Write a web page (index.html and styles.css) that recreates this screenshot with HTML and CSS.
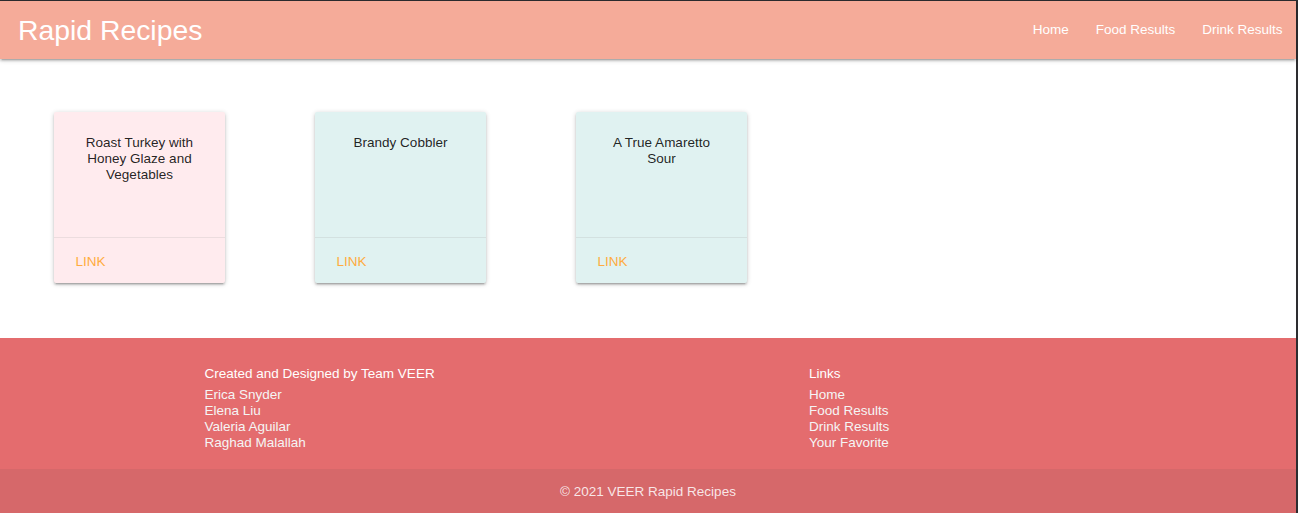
FILE: index.html
```html
<!DOCTYPE html>
<html lang="en">
<head>
<meta charset="utf-8">
<title>Rapid Recipes</title>
<link rel="stylesheet" href="styles.css">
</head>
<body>
<div class="page">
  <nav class="nav">
    <a class="brand" href="#">Rapid Recipes</a>
    <ul class="nav-links">
      <li><a href="#">Home</a></li>
      <li><a href="#">Food Results</a></li>
      <li><a href="#">Drink Results</a></li>
    </ul>
  </nav>
  <main class="main">
    <div class="cards">
      <div class="card card-food">
        <div class="card-content"><p>Roast Turkey with Honey Glaze and Vegetables</p></div>
        <div class="card-action"><a href="#">Link</a></div>
      </div>
      <div class="card card-drink">
        <div class="card-content"><p>Brandy Cobbler</p></div>
        <div class="card-action"><a href="#">Link</a></div>
      </div>
      <div class="card card-drink">
        <div class="card-content"><p>A True Amaretto Sour</p></div>
        <div class="card-action"><a href="#">Link</a></div>
      </div>
    </div>
  </main>
  <footer class="footer">
    <div class="footer-top">
      <div class="footer-col footer-col-left">
        <p class="footer-heading">Created and Designed by Team VEER</p>
        <ul class="footer-list">
          <li>Erica Snyder</li>
          <li>Elena Liu</li>
          <li>Valeria Aguilar</li>
          <li>Raghad Malallah</li>
        </ul>
      </div>
      <div class="footer-col footer-col-right">
        <p class="footer-heading">Links</p>
        <ul class="footer-list">
          <li><a href="#">Home</a></li>
          <li><a href="#">Food Results</a></li>
          <li><a href="#">Drink Results</a></li>
          <li><a href="#">Your Favorite</a></li>
        </ul>
      </div>
    </div>
    <div class="footer-copyright">© 2021 VEER Rapid Recipes</div>
  </footer>
</div>
</body>
</html>
```
FILE: styles.css
```css
* { box-sizing: border-box; }
html, body { margin: 0; padding: 0; }
body {
  font-family: "Liberation Sans", Arial, sans-serif;
  font-size: 13.5px;
  line-height: 16px;
  background: #2d2d30;
}
.page {
  background: #fff;
  margin-top: 1px;
  margin-right: 2px;
  min-height: 512px;
  display: flex;
  flex-direction: column;
}
a { text-decoration: none; color: inherit; }
ul { list-style: none; margin: 0; padding: 0; }
p { margin: 0; }

.nav {
  position: relative;
  z-index: 2;
  height: 57.6px;
  background: #f5ab99;
  display: flex;
  align-items: center;
  justify-content: space-between;
  box-shadow: 0 2px 2px 0 rgba(0,0,0,0.14), 0 3px 1px -2px rgba(0,0,0,0.12), 0 1px 5px 0 rgba(0,0,0,0.2);
}
.brand {
  color: #fff;
  font-size: 28.35px;
  line-height: 57.6px;
  padding: 2px 0 0 18px;
}
.nav-links { display: flex; }
.nav-links a {
  display: block;
  color: #fff;
  padding: 0 13.5px;
  line-height: 57.6px;
}

.main {
  padding: 53.5px 0 54.5px 54px;
}
.cards {
  display: flex;
  gap: 90px;
}
.card {
  width: 171px;
  height: 171px;
  border-radius: 2px;
  display: flex;
  flex-direction: column;
  box-shadow: 0 2px 2px 0 rgba(0,0,0,0.14), 0 3px 1px -2px rgba(0,0,0,0.12), 0 1px 5px 0 rgba(0,0,0,0.2);
}
.card-food { background: #ffebee; }
.card-drink { background: #e0f2f1; }
.card-content {
  flex: 1;
  padding: 22.6px 21.6px 20.6px;
  text-align: center;
  color: rgba(0,0,0,0.87);
}
.card-action {
  border-top: 1px solid rgba(160,160,160,0.2);
  padding: 15.4px 21.6px 13.4px;
}
.card-action a {
  color: #ffab40;
  text-transform: uppercase;
}

.footer {
  background: #e46c6e;
  color: #fff;
  flex: 1;
  display: flex;
  flex-direction: column;
}
.footer-top {
  display: flex;
  padding: 28px 0 18px 204.5px;
}
.footer-col-left { width: 604.5px; }
.footer-heading {
  color: #fff;
  margin-bottom: 5px;
}
.footer-list li { color: #f5f5f5; }
.footer-copyright {
  background: #d6686a;
  color: rgba(255,255,255,0.85);
  min-height: 45px;
  padding-top: 1px;
  display: flex;
  align-items: center;
  justify-content: center;
  flex: 1;
}
```
